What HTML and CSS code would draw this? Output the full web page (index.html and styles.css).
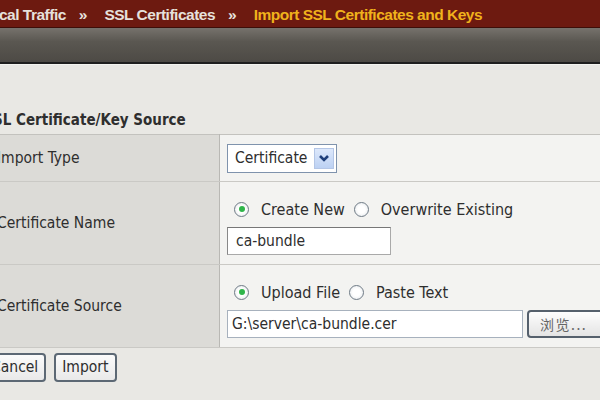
FILE: index.html
```html
<!DOCTYPE html>
<html>
<head>
<meta charset="utf-8">
<link rel="stylesheet" href="styles.css">
</head>
<body>
<div class="crumbs"><span class="crumb">Local Traffic</span><span class="sep">&raquo;</span><span class="crumb">SSL Certificates</span><span class="sep">&raquo;</span><span class="crumb current">Import SSL Certificates and Keys</span></div>
<div class="toolbar"></div>
<div class="content">
  <h2 class="section">SSL Certificate/Key Source</h2>
  <table class="form">
    <tr class="r1">
      <td class="label">Import Type</td>
      <td class="field mid">
        <div class="select"><span class="select-text">Certificate</span><span class="select-btn"><svg width="12" height="9" viewBox="0 0 12 9"><path d="M2 2 L6 6 L10 2" fill="none" stroke="#1f3f7a" stroke-width="2.6"/></svg></span></div>
      </td>
    </tr>
    <tr class="r2">
      <td class="label">Certificate Name</td>
      <td class="field">
        <div class="stack">
          <div class="radios"><span class="radio on"></span><span class="rlabel">Create New</span><span class="radio"></span><span class="rlabel">Overwrite Existing</span></div>
          <div class="text-input name">ca-bundle</div>
        </div>
      </td>
    </tr>
    <tr class="r3">
      <td class="label">Certificate Source</td>
      <td class="field">
        <div class="stack">
          <div class="radios"><span class="radio on"></span><span class="rlabel">Upload File</span><span class="radio"></span><span class="rlabel">Paste Text</span></div>
          <div class="file-row"><div class="text-input file">G:\server\ca-bundle.cer</div><span class="browse">浏览...</span></div>
        </div>
      </td>
    </tr>
  </table>
  <div class="actions"><span class="btn cancel">Cancel</span><span class="btn">Import</span></div>
</div>
</body>
</html>
```
FILE: styles.css
```css
html, body { margin: 0; padding: 0; }
body {
  width: 600px;
  height: 400px;
  overflow: hidden;
  background: #e9e8e4;
  font-family: "DejaVu Sans Condensed", "DejaVu Sans", sans-serif;
  color: #2e2e2e;
}
.crumbs {
  height: 27px;
  background: #6d1a10;
  border-bottom: 1px solid #3e0e08;
  font-family: "Liberation Sans", Arial, sans-serif;
  font-weight: bold;
  font-size: 15.5px;
  letter-spacing: -0.5px;
  line-height: 30px;
  white-space: nowrap;
  text-indent: -19px;
  color: #e6e1dc;
}
.sep { margin: 0 17px 0 13px; letter-spacing: 0; }
.crumb.current { color: #f0b21c; }
.toolbar {
  height: 34px;
  background: linear-gradient(#76726c, #5a5751 40%, #4d4a45);
  border-bottom: 2px solid #1f1f1f;
  box-shadow: 0 1px 0 #f4f4f0;
}
.content {
  margin-left: -14px;
  width: 660px;
}
.section {
  margin: 0;
  padding: 43px 0 0 0;
  text-indent: -2px;
  height: 27px;
  font-size: 15px;
  font-weight: bold;
  line-height: 27px;
}
.form {
  border-collapse: collapse;
  width: 100%;
  border-top: 1px solid #c3c2be;
  border-bottom: 1px solid #b8b7b3;
}
.form td { padding: 0; border-bottom: 1px solid #cac9c5; }
.label {
  width: 222px;
  background: #dcdbd7;
  border-right: 1px solid #b9b8b4;
  padding-left: 11px !important;
  font-size: 15.5px;
  vertical-align: middle;
}
.field { background: #f3f3f1; padding-left: 7px !important; vertical-align: top; }
.field.mid { vertical-align: middle; }
.r1 td { height: 46px; }
.r2 td, .r3 td { height: 82px; }
.stack { padding-top: 19px; }
.select {
  display: flex;
  align-items: center;
  width: 108px;
  height: 27px;
  border: 1px solid #7f93ad;
  background: #fff;
}
.select-text { font-size: 15.5px; padding-left: 7px; flex: 1; }
.select-btn {
  width: 20px;
  height: 21px;
  margin-right: 2px;
  background: linear-gradient(#dde8fb, #bcd1f3);
  border: 1px solid #b4c6e6;
  box-sizing: border-box;
  display: flex;
  align-items: center;
  justify-content: center;
}
.radios { display: flex; align-items: center; height: 16px; font-size: 16px; }
.radio {
  width: 13px;
  height: 13px;
  border: 1px solid #6f7b86;
  border-radius: 50%;
  background: radial-gradient(circle, #fff 40%, #dfe3e7);
  margin-left: 7px;
  margin-right: 12px;
  position: relative;
}
.radio.on::after {
  content: "";
  position: absolute;
  left: 3.5px; top: 3.5px;
  width: 6px; height: 6px;
  border-radius: 50%;
  background: #2fb54a;
}
.rlabel { margin-right: 2px; }
.text-input {
  box-sizing: border-box;
  height: 28px;
  border: 1px solid #a9a9a9;
  border-top-color: #777;
  border-left-color: #888;
  background: #fff;
  font-size: 15.5px;
  line-height: 26px;
  padding-left: 8px;
}
.name { width: 164px; margin-top: 10px; }
.file-row { display: flex; margin-top: 10px; }
.file { width: 296px; border-color: #a7b1bd; padding-left: 4px; }
.browse {
  box-sizing: border-box;
  margin-left: 4px;
  height: 28px;
  width: 80px;
  border: 2px solid #55606c;
  border-radius: 4px;
  background: linear-gradient(#fdfdfd, #e4e4e4);
  font-family: "Noto Sans CJK SC", sans-serif;
  font-size: 14px;
  line-height: 24px;
  color: #666;
  padding-left: 11px;
  letter-spacing: 1.5px;
}
.actions { display: flex; gap: 8px; padding-top: 5px; padding-left: 0; }
.btn {
  box-sizing: border-box;
  height: 29px;
  border: 2px solid #5c6874;
  border-radius: 4px;
  background: linear-gradient(#fbfbfb, #e9e9e9);
  font-size: 15.5px;
  line-height: 25px;
  padding: 0 6px;
}
.btn.cancel { margin-left: -3px; }
```
